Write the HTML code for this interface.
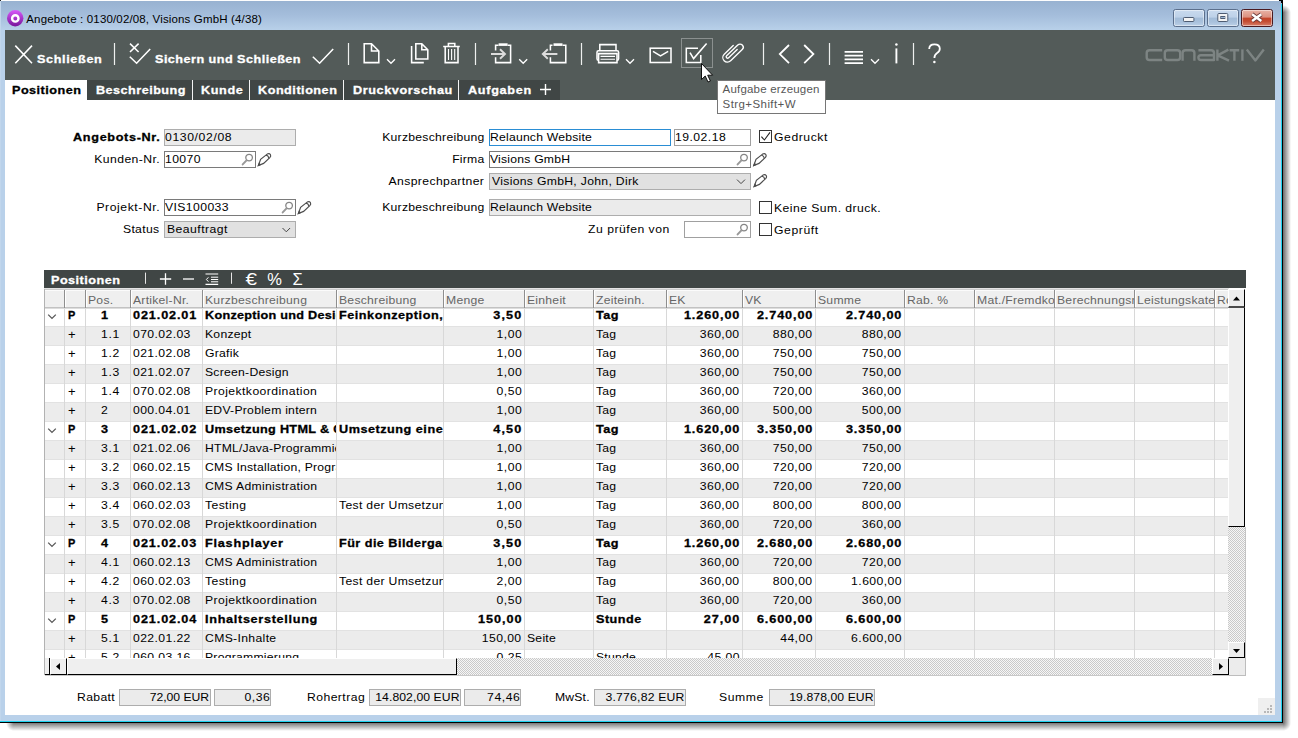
<!DOCTYPE html>
<html><head><meta charset="utf-8"><title>Angebote</title><style>
html,body{margin:0;padding:0;background:#fff;}
body{width:1298px;height:738px;overflow:hidden;position:relative;font-family:'Liberation Sans',sans-serif;font-size:11.5px;}
div,span,svg{position:absolute;box-sizing:border-box;}
.t{white-space:pre;line-height:14px;}
.c{position:relative;display:inline-block;white-space:pre;line-height:14px;}
.cell{overflow:hidden;white-space:nowrap;height:18px;padding-top:0;}
.f{height:17px;border:1px solid #adadad;background:#ebebeb;}
.fw{height:17px;border:1px solid #7a7a7a;background:#fff;}
.fs{height:17px;border:1px solid #adadad;background:#e1e1e1;}
.cb{width:13px;height:13px;border:1px solid #333;background:#fff;}
</style></head><body>
<div style="left:14px;top:723px;width:1269px;height:8px;background:linear-gradient(to bottom,rgba(0,0,0,.52),rgba(0,0,0,0));"></div>
<div style="left:6px;top:723px;width:8px;height:8px;background:radial-gradient(circle 8px at 100% 0,rgba(0,0,0,.52),rgba(0,0,0,0));"></div>
<div style="left:1283px;top:13px;width:8px;height:710px;background:linear-gradient(to right,rgba(0,0,0,.58),rgba(0,0,0,0));"></div>
<div style="left:1283px;top:5px;width:8px;height:8px;background:radial-gradient(circle 8px at 0 100%,rgba(0,0,0,.58),rgba(0,0,0,0));"></div>
<div style="left:1283px;top:723px;width:8px;height:8px;background:radial-gradient(circle 8px at 0 0,rgba(0,0,0,.55),rgba(0,0,0,0));"></div>
<div style="left:0;top:0;width:1283px;height:723px;background:#b9d1ea;"></div>
<div style="left:0;top:0;width:1283px;height:30px;background:linear-gradient(#97b1d0,#a4bddb 50%,#b8d0e9);"></div>
<div style="left:1px;top:0;width:1279px;height:1px;background:#fdfdfd;"></div>
<div style="left:0;top:1px;width:1px;height:721px;background:#c1d6ec;"></div>
<div style="left:1281px;top:4px;width:1px;height:718px;background:#1fd4f0;"></div>
<div style="left:1282px;top:3px;width:1px;height:720px;background:#000;"></div>
<div style="left:0;top:721px;width:1282px;height:1px;background:#1fd4f0;"></div>
<div style="left:0;top:722px;width:1283px;height:1px;background:#000;"></div>
<div style="left:1279px;top:0;width:4px;height:1px;background:#000;"></div>
<div style="left:1281px;top:1px;width:2px;height:2px;background:#000;"></div>
<div style="left:0;top:0;width:1px;height:1px;background:#222;"></div>
<div style="left:5px;top:30px;width:1270px;height:685px;background:#fff;"></div>
<div style="left:5px;top:30px;width:1270px;height:70px;background:#535b59;"></div>
<div style="left:5px;top:80px;width:555px;height:20px;background:#404645;"></div>
<div style="left:5px;top:80px;width:82px;height:20px;background:#fff;"></div>
<div style="left:192px;top:80px;width:1px;height:20px;background:#f4f4f4;"></div>
<div style="left:249px;top:80px;width:1px;height:20px;background:#f4f4f4;"></div>
<div style="left:343px;top:80px;width:1px;height:20px;background:#f4f4f4;"></div>
<div style="left:458px;top:80px;width:1px;height:20px;background:#f4f4f4;"></div>
<div style="left:1173px;top:9px;width:32px;height:18px;border:1px solid #5b6f8c;border-radius:2.5px;background:linear-gradient(#c9daee 0%,#bdd1e8 45%,#a3bcd8 50%,#a9c1dc 75%,#bcd0e7 100%);box-shadow:inset 0 0 0 1px rgba(255,255,255,.45);"></div>
<div style="left:1207px;top:9px;width:32px;height:18px;border:1px solid #5b6f8c;border-radius:2.5px;background:linear-gradient(#c9daee 0%,#bdd1e8 45%,#a3bcd8 50%,#a9c1dc 75%,#bcd0e7 100%);box-shadow:inset 0 0 0 1px rgba(255,255,255,.45);"></div>
<div style="left:1241px;top:9px;width:32px;height:18px;border:1px solid #4a1a20;border-radius:2.5px;background:linear-gradient(#e9b3a6 0%,#dc8f7f 45%,#c4442a 50%,#c34a30 70%,#d87f6b 100%);box-shadow:inset 0 0 0 1px rgba(255,255,255,.45);"></div>
<div style="left:717px;top:80px;width:109px;height:34px;background:#fff;border:1px solid #767676;"></div>
<div class="f" style="left:164px;top:129px;width:132px;"></div>
<div class="fw" style="left:164px;top:151px;width:92px;"></div>
<div class="fw" style="left:164px;top:199px;width:132px;"></div>
<div class="fs" style="left:164px;top:221px;width:132px;"></div>
<div class="fw" style="left:489px;top:129px;width:182px;border-color:#2a8dd4;"></div>
<div class="fw" style="left:674px;top:129px;width:77px;border-color:#a0a0a0;"></div>
<div class="fw" style="left:489px;top:151px;width:262px;"></div>
<div class="fs" style="left:489px;top:173px;width:262px;"></div>
<div class="f" style="left:489px;top:199px;width:262px;"></div>
<div class="fw" style="left:684px;top:221px;width:67px;border-color:#a0a0a0;"></div>
<div class="cb" style="left:759px;top:130px;"></div>
<div class="cb" style="left:759px;top:201px;"></div>
<div class="cb" style="left:759px;top:223px;"></div>
<div style="left:44px;top:270px;width:1202px;height:18px;background:#404645;"></div>
<div style="left:44px;top:288px;width:1185px;height:20px;background:#efefef;border-bottom:1px solid #c2c2c2;"></div>
<div style="left:44px;top:288px;width:1185px;height:1px;background:#e4e4e4;"></div>
<div style="left:44px;top:289px;width:1185px;height:1px;background:#cdcdcd;"></div>
<div style="left:44px;top:290px;width:1185px;height:1px;background:#fbfbfb;"></div>
<div class="f" style="left:119px;top:689px;width:92px;"></div>
<div class="f" style="left:214px;top:689px;width:57px;"></div>
<div class="f" style="left:369px;top:689px;width:92px;"></div>
<div class="f" style="left:464px;top:689px;width:57px;"></div>
<div class="f" style="left:594px;top:689px;width:92px;"></div>
<div class="f" style="left:769px;top:689px;width:106px;"></div>
<div style="left:64px;top:290px;width:1px;height:18px;background:#8e8e8e;"></div>
<div style="left:65px;top:291px;width:1px;height:16px;background:#fff;"></div>
<div style="left:85px;top:290px;width:1px;height:18px;background:#8e8e8e;"></div>
<div style="left:86px;top:291px;width:1px;height:16px;background:#fff;"></div>
<div class="cell" style="left:86px;top:293px;width:44px;padding-left:2px;height:14px;">
<span class="c" style="font-size:11.5px;color:#666;letter-spacing:0.230px;transform:scaleX(1.06);transform-origin:0 0;">Pos.</span>
</div>
<div style="left:130px;top:290px;width:1px;height:18px;background:#8e8e8e;"></div>
<div style="left:131px;top:291px;width:1px;height:16px;background:#fff;"></div>
<div class="cell" style="left:131px;top:293px;width:71px;padding-left:2px;height:14px;">
<span class="c" style="font-size:11.5px;color:#666;letter-spacing:0.230px;transform:scaleX(1.06);transform-origin:0 0;">Artikel-Nr.</span>
</div>
<div style="left:202px;top:290px;width:1px;height:18px;background:#8e8e8e;"></div>
<div style="left:203px;top:291px;width:1px;height:16px;background:#fff;"></div>
<div class="cell" style="left:203px;top:293px;width:133px;padding-left:2px;height:14px;">
<span class="c" style="font-size:11.5px;color:#666;letter-spacing:0.230px;transform:scaleX(1.06);transform-origin:0 0;">Kurzbeschreibung</span>
</div>
<div style="left:336px;top:290px;width:1px;height:18px;background:#8e8e8e;"></div>
<div style="left:337px;top:291px;width:1px;height:16px;background:#fff;"></div>
<div class="cell" style="left:337px;top:293px;width:106px;padding-left:2px;height:14px;">
<span class="c" style="font-size:11.5px;color:#666;letter-spacing:0.230px;transform:scaleX(1.06);transform-origin:0 0;">Beschreibung</span>
</div>
<div style="left:443px;top:290px;width:1px;height:18px;background:#8e8e8e;"></div>
<div style="left:444px;top:291px;width:1px;height:16px;background:#fff;"></div>
<div class="cell" style="left:444px;top:293px;width:80px;padding-left:2px;height:14px;">
<span class="c" style="font-size:11.5px;color:#666;letter-spacing:0.230px;transform:scaleX(1.06);transform-origin:0 0;">Menge</span>
</div>
<div style="left:524px;top:290px;width:1px;height:18px;background:#8e8e8e;"></div>
<div style="left:525px;top:291px;width:1px;height:16px;background:#fff;"></div>
<div class="cell" style="left:525px;top:293px;width:68px;padding-left:2px;height:14px;">
<span class="c" style="font-size:11.5px;color:#666;letter-spacing:0.230px;transform:scaleX(1.06);transform-origin:0 0;">Einheit</span>
</div>
<div style="left:593px;top:290px;width:1px;height:18px;background:#8e8e8e;"></div>
<div style="left:594px;top:291px;width:1px;height:16px;background:#fff;"></div>
<div class="cell" style="left:594px;top:293px;width:72px;padding-left:2px;height:14px;">
<span class="c" style="font-size:11.5px;color:#666;letter-spacing:0.230px;transform:scaleX(1.06);transform-origin:0 0;">Zeiteinh.</span>
</div>
<div style="left:666px;top:290px;width:1px;height:18px;background:#8e8e8e;"></div>
<div style="left:667px;top:291px;width:1px;height:16px;background:#fff;"></div>
<div class="cell" style="left:667px;top:293px;width:75px;padding-left:2px;height:14px;">
<span class="c" style="font-size:11.5px;color:#666;letter-spacing:0.230px;transform:scaleX(1.06);transform-origin:0 0;">EK</span>
</div>
<div style="left:742px;top:290px;width:1px;height:18px;background:#8e8e8e;"></div>
<div style="left:743px;top:291px;width:1px;height:16px;background:#fff;"></div>
<div class="cell" style="left:743px;top:293px;width:72px;padding-left:2px;height:14px;">
<span class="c" style="font-size:11.5px;color:#666;letter-spacing:0.230px;transform:scaleX(1.06);transform-origin:0 0;">VK</span>
</div>
<div style="left:815px;top:290px;width:1px;height:18px;background:#8e8e8e;"></div>
<div style="left:816px;top:291px;width:1px;height:16px;background:#fff;"></div>
<div class="cell" style="left:816px;top:293px;width:88px;padding-left:2px;height:14px;">
<span class="c" style="font-size:11.5px;color:#666;letter-spacing:0.230px;transform:scaleX(1.06);transform-origin:0 0;">Summe</span>
</div>
<div style="left:904px;top:290px;width:1px;height:18px;background:#8e8e8e;"></div>
<div style="left:905px;top:291px;width:1px;height:16px;background:#fff;"></div>
<div class="cell" style="left:905px;top:293px;width:69px;padding-left:2px;height:14px;">
<span class="c" style="font-size:11.5px;color:#666;letter-spacing:0.230px;transform:scaleX(1.06);transform-origin:0 0;">Rab. %</span>
</div>
<div style="left:974px;top:290px;width:1px;height:18px;background:#8e8e8e;"></div>
<div style="left:975px;top:291px;width:1px;height:16px;background:#fff;"></div>
<div class="cell" style="left:975px;top:293px;width:79px;padding-left:2px;height:14px;">
<span class="c" style="font-size:11.5px;color:#666;letter-spacing:0.230px;transform:scaleX(1.06);transform-origin:0 0;">Mat./Fremdkosten</span>
</div>
<div style="left:1054px;top:290px;width:1px;height:18px;background:#8e8e8e;"></div>
<div style="left:1055px;top:291px;width:1px;height:16px;background:#fff;"></div>
<div class="cell" style="left:1055px;top:293px;width:79px;padding-left:2px;height:14px;">
<span class="c" style="font-size:11.5px;color:#666;letter-spacing:0.230px;transform:scaleX(1.06);transform-origin:0 0;">Berechnungsmodus</span>
</div>
<div style="left:1134px;top:290px;width:1px;height:18px;background:#8e8e8e;"></div>
<div style="left:1135px;top:291px;width:1px;height:16px;background:#fff;"></div>
<div class="cell" style="left:1135px;top:293px;width:79px;padding-left:2px;height:14px;">
<span class="c" style="font-size:11.5px;color:#666;letter-spacing:0.230px;transform:scaleX(1.06);transform-origin:0 0;">Leistungskategorie</span>
</div>
<div style="left:1214px;top:290px;width:1px;height:18px;background:#8e8e8e;"></div>
<div style="left:1215px;top:291px;width:1px;height:16px;background:#fff;"></div>
<div class="cell" style="left:1215px;top:293px;width:13px;padding-left:2px;height:14px;">
<span class="c" style="font-size:11.5px;color:#666;letter-spacing:0.230px;transform:scaleX(1.06);transform-origin:0 0;">Rolle</span>
</div>
<div style="left:44px;top:308px;width:1184px;height:350px;overflow:hidden;background:#fff;">
<div style="left:0;top:0px;width:1184px;height:18px;background:#fff;"></div>
<div style="left:0;top:18px;width:1184px;height:1px;background:#e2e2e2;"></div>
<div class="cell" style="left:21px;top:0px;width:20px;padding-left:3px;padding-right:2.5px;text-align:left;">
<span class="c" style="font-size:11.5px;color:#000;letter-spacing:0.000px;font-weight:bold;-webkit-text-stroke:0.3px #000;transform:scaleX(0.95);transform-origin:0 0;">P</span>
</div>
<div class="cell" style="left:42px;top:0px;width:44px;padding-left:14.5px;padding-right:2.5px;text-align:left;">
<span class="c" style="font-size:11.5px;color:#000;letter-spacing:2.066px;font-weight:bold;-webkit-text-stroke:0.3px #000;transform:scaleX(1.1);transform-origin:0 0;">1</span>
</div>
<div class="cell" style="left:87px;top:0px;width:71px;padding-left:1.7px;padding-right:2.5px;text-align:left;">
<span class="c" style="font-size:11.5px;color:#000;letter-spacing:0.797px;font-weight:bold;-webkit-text-stroke:0.3px #000;transform:scaleX(1.1);transform-origin:0 0;">021.02.01</span>
</div>
<div class="cell" style="left:159px;top:0px;width:133px;padding-left:1.7px;padding-right:2.5px;text-align:left;">
<span class="c" style="font-size:11.5px;color:#000;letter-spacing:0.239px;font-weight:bold;-webkit-text-stroke:0.3px #000;transform:scaleX(1.1);transform-origin:0 0;">Konzeption und Design</span>
</div>
<div class="cell" style="left:293px;top:0px;width:106px;padding-left:1.7px;padding-right:2.5px;text-align:left;">
<span class="c" style="font-size:11.5px;color:#000;letter-spacing:0.480px;font-weight:bold;-webkit-text-stroke:0.3px #000;transform:scaleX(1.1);transform-origin:0 0;">Feinkonzeption,</span>
</div>
<div class="cell" style="left:400px;top:0px;width:80px;padding-left:1.7px;padding-right:2.5px;text-align:right;">
<span class="c" style="font-size:11.5px;color:#000;letter-spacing:0.977px;font-weight:bold;-webkit-text-stroke:0.3px #000;transform:scaleX(1.1);transform-origin:100% 0;margin-right:-0.977px;">3,50</span>
</div>
<div class="cell" style="left:550px;top:0px;width:72px;padding-left:1.7px;padding-right:2.5px;text-align:left;">
<span class="c" style="font-size:11.5px;color:#000;letter-spacing:0.420px;font-weight:bold;-webkit-text-stroke:0.3px #000;transform:scaleX(1.1);transform-origin:0 0;">Tag</span>
</div>
<div class="cell" style="left:623px;top:0px;width:75px;padding-left:1.7px;padding-right:2.5px;text-align:right;">
<span class="c" style="font-size:11.5px;color:#000;letter-spacing:0.809px;font-weight:bold;-webkit-text-stroke:0.3px #000;transform:scaleX(1.1);transform-origin:100% 0;margin-right:-0.809px;">1.260,00</span>
</div>
<div class="cell" style="left:699px;top:0px;width:72px;padding-left:1.7px;padding-right:2.5px;text-align:right;">
<span class="c" style="font-size:11.5px;color:#000;letter-spacing:0.809px;font-weight:bold;-webkit-text-stroke:0.3px #000;transform:scaleX(1.1);transform-origin:100% 0;margin-right:-0.809px;">2.740,00</span>
</div>
<div class="cell" style="left:772px;top:0px;width:88px;padding-left:1.7px;padding-right:2.5px;text-align:right;">
<span class="c" style="font-size:11.5px;color:#000;letter-spacing:0.809px;font-weight:bold;-webkit-text-stroke:0.3px #000;transform:scaleX(1.1);transform-origin:100% 0;margin-right:-0.809px;">2.740,00</span>
</div>
<div style="left:0;top:19px;width:1184px;height:18px;background:#ececec;"></div>
<div style="left:0;top:37px;width:1184px;height:1px;background:#e2e2e2;"></div>
<div class="cell" style="left:21px;top:19px;width:20px;padding-left:3px;padding-right:2.5px;text-align:left;">
<span class="c" style="font-size:13px;color:#000;letter-spacing:0.000px;transform-origin:0 0;top:1.4px;">+</span>
</div>
<div class="cell" style="left:42px;top:19px;width:44px;padding-left:14.5px;padding-right:2.5px;text-align:left;">
<span class="c" style="font-size:11.5px;color:#000;letter-spacing:0.579px;transform:scaleX(1.06);transform-origin:0 0;">1.1</span>
</div>
<div class="cell" style="left:87px;top:19px;width:71px;padding-left:1.7px;padding-right:2.5px;text-align:left;">
<span class="c" style="font-size:11.5px;color:#000;letter-spacing:0.373px;transform:scaleX(1.06);transform-origin:0 0;">070.02.03</span>
</div>
<div class="cell" style="left:159px;top:19px;width:133px;padding-left:1.7px;padding-right:2.5px;text-align:left;">
<span class="c" style="font-size:11.5px;color:#000;letter-spacing:0.230px;transform:scaleX(1.06);transform-origin:0 0;">Konzept</span>
</div>
<div class="cell" style="left:400px;top:19px;width:80px;padding-left:1.7px;padding-right:2.5px;text-align:right;">
<span class="c" style="font-size:11.5px;color:#000;letter-spacing:0.487px;transform:scaleX(1.06);transform-origin:100% 0;margin-right:-0.487px;">1,00</span>
</div>
<div class="cell" style="left:550px;top:19px;width:72px;padding-left:1.7px;padding-right:2.5px;text-align:left;">
<span class="c" style="font-size:11.5px;color:#000;letter-spacing:0.230px;transform:scaleX(1.06);transform-origin:0 0;">Tag</span>
</div>
<div class="cell" style="left:623px;top:19px;width:75px;padding-left:1.7px;padding-right:2.5px;text-align:right;">
<span class="c" style="font-size:11.5px;color:#000;letter-spacing:0.393px;transform:scaleX(1.06);transform-origin:100% 0;margin-right:-0.393px;">360,00</span>
</div>
<div class="cell" style="left:699px;top:19px;width:72px;padding-left:1.7px;padding-right:2.5px;text-align:right;">
<span class="c" style="font-size:11.5px;color:#000;letter-spacing:0.393px;transform:scaleX(1.06);transform-origin:100% 0;margin-right:-0.393px;">880,00</span>
</div>
<div class="cell" style="left:772px;top:19px;width:88px;padding-left:1.7px;padding-right:2.5px;text-align:right;">
<span class="c" style="font-size:11.5px;color:#000;letter-spacing:0.393px;transform:scaleX(1.06);transform-origin:100% 0;margin-right:-0.393px;">880,00</span>
</div>
<div style="left:0;top:38px;width:1184px;height:18px;background:#fff;"></div>
<div style="left:0;top:56px;width:1184px;height:1px;background:#e2e2e2;"></div>
<div class="cell" style="left:21px;top:38px;width:20px;padding-left:3px;padding-right:2.5px;text-align:left;">
<span class="c" style="font-size:13px;color:#000;letter-spacing:0.000px;transform-origin:0 0;top:1.4px;">+</span>
</div>
<div class="cell" style="left:42px;top:38px;width:44px;padding-left:14.5px;padding-right:2.5px;text-align:left;">
<span class="c" style="font-size:11.5px;color:#000;letter-spacing:0.579px;transform:scaleX(1.06);transform-origin:0 0;">1.2</span>
</div>
<div class="cell" style="left:87px;top:38px;width:71px;padding-left:1.7px;padding-right:2.5px;text-align:left;">
<span class="c" style="font-size:11.5px;color:#000;letter-spacing:0.373px;transform:scaleX(1.06);transform-origin:0 0;">021.02.08</span>
</div>
<div class="cell" style="left:159px;top:38px;width:133px;padding-left:1.7px;padding-right:2.5px;text-align:left;">
<span class="c" style="font-size:11.5px;color:#000;letter-spacing:0.230px;transform:scaleX(1.06);transform-origin:0 0;">Grafik</span>
</div>
<div class="cell" style="left:400px;top:38px;width:80px;padding-left:1.7px;padding-right:2.5px;text-align:right;">
<span class="c" style="font-size:11.5px;color:#000;letter-spacing:0.487px;transform:scaleX(1.06);transform-origin:100% 0;margin-right:-0.487px;">1,00</span>
</div>
<div class="cell" style="left:550px;top:38px;width:72px;padding-left:1.7px;padding-right:2.5px;text-align:left;">
<span class="c" style="font-size:11.5px;color:#000;letter-spacing:0.230px;transform:scaleX(1.06);transform-origin:0 0;">Tag</span>
</div>
<div class="cell" style="left:623px;top:38px;width:75px;padding-left:1.7px;padding-right:2.5px;text-align:right;">
<span class="c" style="font-size:11.5px;color:#000;letter-spacing:0.393px;transform:scaleX(1.06);transform-origin:100% 0;margin-right:-0.393px;">360,00</span>
</div>
<div class="cell" style="left:699px;top:38px;width:72px;padding-left:1.7px;padding-right:2.5px;text-align:right;">
<span class="c" style="font-size:11.5px;color:#000;letter-spacing:0.393px;transform:scaleX(1.06);transform-origin:100% 0;margin-right:-0.393px;">750,00</span>
</div>
<div class="cell" style="left:772px;top:38px;width:88px;padding-left:1.7px;padding-right:2.5px;text-align:right;">
<span class="c" style="font-size:11.5px;color:#000;letter-spacing:0.393px;transform:scaleX(1.06);transform-origin:100% 0;margin-right:-0.393px;">750,00</span>
</div>
<div style="left:0;top:57px;width:1184px;height:18px;background:#ececec;"></div>
<div style="left:0;top:75px;width:1184px;height:1px;background:#e2e2e2;"></div>
<div class="cell" style="left:21px;top:57px;width:20px;padding-left:3px;padding-right:2.5px;text-align:left;">
<span class="c" style="font-size:13px;color:#000;letter-spacing:0.000px;transform-origin:0 0;top:1.4px;">+</span>
</div>
<div class="cell" style="left:42px;top:57px;width:44px;padding-left:14.5px;padding-right:2.5px;text-align:left;">
<span class="c" style="font-size:11.5px;color:#000;letter-spacing:0.579px;transform:scaleX(1.06);transform-origin:0 0;">1.3</span>
</div>
<div class="cell" style="left:87px;top:57px;width:71px;padding-left:1.7px;padding-right:2.5px;text-align:left;">
<span class="c" style="font-size:11.5px;color:#000;letter-spacing:0.373px;transform:scaleX(1.06);transform-origin:0 0;">021.02.07</span>
</div>
<div class="cell" style="left:159px;top:57px;width:133px;padding-left:1.7px;padding-right:2.5px;text-align:left;">
<span class="c" style="font-size:11.5px;color:#000;letter-spacing:0.230px;transform:scaleX(1.06);transform-origin:0 0;">Screen-Design</span>
</div>
<div class="cell" style="left:400px;top:57px;width:80px;padding-left:1.7px;padding-right:2.5px;text-align:right;">
<span class="c" style="font-size:11.5px;color:#000;letter-spacing:0.487px;transform:scaleX(1.06);transform-origin:100% 0;margin-right:-0.487px;">1,00</span>
</div>
<div class="cell" style="left:550px;top:57px;width:72px;padding-left:1.7px;padding-right:2.5px;text-align:left;">
<span class="c" style="font-size:11.5px;color:#000;letter-spacing:0.230px;transform:scaleX(1.06);transform-origin:0 0;">Tag</span>
</div>
<div class="cell" style="left:623px;top:57px;width:75px;padding-left:1.7px;padding-right:2.5px;text-align:right;">
<span class="c" style="font-size:11.5px;color:#000;letter-spacing:0.393px;transform:scaleX(1.06);transform-origin:100% 0;margin-right:-0.393px;">360,00</span>
</div>
<div class="cell" style="left:699px;top:57px;width:72px;padding-left:1.7px;padding-right:2.5px;text-align:right;">
<span class="c" style="font-size:11.5px;color:#000;letter-spacing:0.393px;transform:scaleX(1.06);transform-origin:100% 0;margin-right:-0.393px;">750,00</span>
</div>
<div class="cell" style="left:772px;top:57px;width:88px;padding-left:1.7px;padding-right:2.5px;text-align:right;">
<span class="c" style="font-size:11.5px;color:#000;letter-spacing:0.393px;transform:scaleX(1.06);transform-origin:100% 0;margin-right:-0.393px;">750,00</span>
</div>
<div style="left:0;top:76px;width:1184px;height:18px;background:#fff;"></div>
<div style="left:0;top:94px;width:1184px;height:1px;background:#e2e2e2;"></div>
<div class="cell" style="left:21px;top:76px;width:20px;padding-left:3px;padding-right:2.5px;text-align:left;">
<span class="c" style="font-size:13px;color:#000;letter-spacing:0.000px;transform-origin:0 0;top:1.4px;">+</span>
</div>
<div class="cell" style="left:42px;top:76px;width:44px;padding-left:14.5px;padding-right:2.5px;text-align:left;">
<span class="c" style="font-size:11.5px;color:#000;letter-spacing:0.579px;transform:scaleX(1.06);transform-origin:0 0;">1.4</span>
</div>
<div class="cell" style="left:87px;top:76px;width:71px;padding-left:1.7px;padding-right:2.5px;text-align:left;">
<span class="c" style="font-size:11.5px;color:#000;letter-spacing:0.373px;transform:scaleX(1.06);transform-origin:0 0;">070.02.08</span>
</div>
<div class="cell" style="left:159px;top:76px;width:133px;padding-left:1.7px;padding-right:2.5px;text-align:left;">
<span class="c" style="font-size:11.5px;color:#000;letter-spacing:0.394px;transform:scaleX(1.06);transform-origin:0 0;">Projektkoordination</span>
</div>
<div class="cell" style="left:400px;top:76px;width:80px;padding-left:1.7px;padding-right:2.5px;text-align:right;">
<span class="c" style="font-size:11.5px;color:#000;letter-spacing:0.487px;transform:scaleX(1.06);transform-origin:100% 0;margin-right:-0.487px;">0,50</span>
</div>
<div class="cell" style="left:550px;top:76px;width:72px;padding-left:1.7px;padding-right:2.5px;text-align:left;">
<span class="c" style="font-size:11.5px;color:#000;letter-spacing:0.230px;transform:scaleX(1.06);transform-origin:0 0;">Tag</span>
</div>
<div class="cell" style="left:623px;top:76px;width:75px;padding-left:1.7px;padding-right:2.5px;text-align:right;">
<span class="c" style="font-size:11.5px;color:#000;letter-spacing:0.393px;transform:scaleX(1.06);transform-origin:100% 0;margin-right:-0.393px;">360,00</span>
</div>
<div class="cell" style="left:699px;top:76px;width:72px;padding-left:1.7px;padding-right:2.5px;text-align:right;">
<span class="c" style="font-size:11.5px;color:#000;letter-spacing:0.393px;transform:scaleX(1.06);transform-origin:100% 0;margin-right:-0.393px;">720,00</span>
</div>
<div class="cell" style="left:772px;top:76px;width:88px;padding-left:1.7px;padding-right:2.5px;text-align:right;">
<span class="c" style="font-size:11.5px;color:#000;letter-spacing:0.393px;transform:scaleX(1.06);transform-origin:100% 0;margin-right:-0.393px;">360,00</span>
</div>
<div style="left:0;top:95px;width:1184px;height:18px;background:#ececec;"></div>
<div style="left:0;top:113px;width:1184px;height:1px;background:#e2e2e2;"></div>
<div class="cell" style="left:21px;top:95px;width:20px;padding-left:3px;padding-right:2.5px;text-align:left;">
<span class="c" style="font-size:13px;color:#000;letter-spacing:0.000px;transform-origin:0 0;top:1.4px;">+</span>
</div>
<div class="cell" style="left:42px;top:95px;width:44px;padding-left:14.5px;padding-right:2.5px;text-align:left;">
<span class="c" style="font-size:11.5px;color:#000;letter-spacing:0.952px;transform:scaleX(1.06);transform-origin:0 0;">2</span>
</div>
<div class="cell" style="left:87px;top:95px;width:71px;padding-left:1.7px;padding-right:2.5px;text-align:left;">
<span class="c" style="font-size:11.5px;color:#000;letter-spacing:0.373px;transform:scaleX(1.06);transform-origin:0 0;">000.04.01</span>
</div>
<div class="cell" style="left:159px;top:95px;width:133px;padding-left:1.7px;padding-right:2.5px;text-align:left;">
<span class="c" style="font-size:11.5px;color:#000;letter-spacing:0.230px;transform:scaleX(1.06);transform-origin:0 0;">EDV-Problem intern</span>
</div>
<div class="cell" style="left:400px;top:95px;width:80px;padding-left:1.7px;padding-right:2.5px;text-align:right;">
<span class="c" style="font-size:11.5px;color:#000;letter-spacing:0.487px;transform:scaleX(1.06);transform-origin:100% 0;margin-right:-0.487px;">1,00</span>
</div>
<div class="cell" style="left:550px;top:95px;width:72px;padding-left:1.7px;padding-right:2.5px;text-align:left;">
<span class="c" style="font-size:11.5px;color:#000;letter-spacing:0.230px;transform:scaleX(1.06);transform-origin:0 0;">Tag</span>
</div>
<div class="cell" style="left:623px;top:95px;width:75px;padding-left:1.7px;padding-right:2.5px;text-align:right;">
<span class="c" style="font-size:11.5px;color:#000;letter-spacing:0.393px;transform:scaleX(1.06);transform-origin:100% 0;margin-right:-0.393px;">360,00</span>
</div>
<div class="cell" style="left:699px;top:95px;width:72px;padding-left:1.7px;padding-right:2.5px;text-align:right;">
<span class="c" style="font-size:11.5px;color:#000;letter-spacing:0.393px;transform:scaleX(1.06);transform-origin:100% 0;margin-right:-0.393px;">500,00</span>
</div>
<div class="cell" style="left:772px;top:95px;width:88px;padding-left:1.7px;padding-right:2.5px;text-align:right;">
<span class="c" style="font-size:11.5px;color:#000;letter-spacing:0.393px;transform:scaleX(1.06);transform-origin:100% 0;margin-right:-0.393px;">500,00</span>
</div>
<div style="left:0;top:114px;width:1184px;height:18px;background:#fff;"></div>
<div style="left:0;top:132px;width:1184px;height:1px;background:#e2e2e2;"></div>
<div class="cell" style="left:21px;top:114px;width:20px;padding-left:3px;padding-right:2.5px;text-align:left;">
<span class="c" style="font-size:11.5px;color:#000;letter-spacing:0.000px;font-weight:bold;-webkit-text-stroke:0.3px #000;transform:scaleX(0.95);transform-origin:0 0;">P</span>
</div>
<div class="cell" style="left:42px;top:114px;width:44px;padding-left:14.5px;padding-right:2.5px;text-align:left;">
<span class="c" style="font-size:11.5px;color:#000;letter-spacing:2.066px;font-weight:bold;-webkit-text-stroke:0.3px #000;transform:scaleX(1.1);transform-origin:0 0;">3</span>
</div>
<div class="cell" style="left:87px;top:114px;width:71px;padding-left:1.7px;padding-right:2.5px;text-align:left;">
<span class="c" style="font-size:11.5px;color:#000;letter-spacing:0.797px;font-weight:bold;-webkit-text-stroke:0.3px #000;transform:scaleX(1.1);transform-origin:0 0;">021.02.02</span>
</div>
<div class="cell" style="left:159px;top:114px;width:133px;padding-left:1.7px;padding-right:2.5px;text-align:left;">
<span class="c" style="font-size:11.5px;color:#000;letter-spacing:0.293px;font-weight:bold;-webkit-text-stroke:0.3px #000;transform:scaleX(1.1);transform-origin:0 0;">Umsetzung HTML &amp; CSS</span>
</div>
<div class="cell" style="left:293px;top:114px;width:106px;padding-left:1.7px;padding-right:2.5px;text-align:left;">
<span class="c" style="font-size:11.5px;color:#000;letter-spacing:0.467px;font-weight:bold;-webkit-text-stroke:0.3px #000;transform:scaleX(1.1);transform-origin:0 0;">Umsetzung eines</span>
</div>
<div class="cell" style="left:400px;top:114px;width:80px;padding-left:1.7px;padding-right:2.5px;text-align:right;">
<span class="c" style="font-size:11.5px;color:#000;letter-spacing:0.977px;font-weight:bold;-webkit-text-stroke:0.3px #000;transform:scaleX(1.1);transform-origin:100% 0;margin-right:-0.977px;">4,50</span>
</div>
<div class="cell" style="left:550px;top:114px;width:72px;padding-left:1.7px;padding-right:2.5px;text-align:left;">
<span class="c" style="font-size:11.5px;color:#000;letter-spacing:0.420px;font-weight:bold;-webkit-text-stroke:0.3px #000;transform:scaleX(1.1);transform-origin:0 0;">Tag</span>
</div>
<div class="cell" style="left:623px;top:114px;width:75px;padding-left:1.7px;padding-right:2.5px;text-align:right;">
<span class="c" style="font-size:11.5px;color:#000;letter-spacing:0.809px;font-weight:bold;-webkit-text-stroke:0.3px #000;transform:scaleX(1.1);transform-origin:100% 0;margin-right:-0.809px;">1.620,00</span>
</div>
<div class="cell" style="left:699px;top:114px;width:72px;padding-left:1.7px;padding-right:2.5px;text-align:right;">
<span class="c" style="font-size:11.5px;color:#000;letter-spacing:0.809px;font-weight:bold;-webkit-text-stroke:0.3px #000;transform:scaleX(1.1);transform-origin:100% 0;margin-right:-0.809px;">3.350,00</span>
</div>
<div class="cell" style="left:772px;top:114px;width:88px;padding-left:1.7px;padding-right:2.5px;text-align:right;">
<span class="c" style="font-size:11.5px;color:#000;letter-spacing:0.809px;font-weight:bold;-webkit-text-stroke:0.3px #000;transform:scaleX(1.1);transform-origin:100% 0;margin-right:-0.809px;">3.350,00</span>
</div>
<div style="left:0;top:133px;width:1184px;height:18px;background:#ececec;"></div>
<div style="left:0;top:151px;width:1184px;height:1px;background:#e2e2e2;"></div>
<div class="cell" style="left:21px;top:133px;width:20px;padding-left:3px;padding-right:2.5px;text-align:left;">
<span class="c" style="font-size:13px;color:#000;letter-spacing:0.000px;transform-origin:0 0;top:1.4px;">+</span>
</div>
<div class="cell" style="left:42px;top:133px;width:44px;padding-left:14.5px;padding-right:2.5px;text-align:left;">
<span class="c" style="font-size:11.5px;color:#000;letter-spacing:0.579px;transform:scaleX(1.06);transform-origin:0 0;">3.1</span>
</div>
<div class="cell" style="left:87px;top:133px;width:71px;padding-left:1.7px;padding-right:2.5px;text-align:left;">
<span class="c" style="font-size:11.5px;color:#000;letter-spacing:0.373px;transform:scaleX(1.06);transform-origin:0 0;">021.02.06</span>
</div>
<div class="cell" style="left:159px;top:133px;width:133px;padding-left:1.7px;padding-right:2.5px;text-align:left;">
<span class="c" style="font-size:11.5px;color:#000;letter-spacing:0.179px;transform:scaleX(1.06);transform-origin:0 0;">HTML/Java-Programmierung</span>
</div>
<div class="cell" style="left:400px;top:133px;width:80px;padding-left:1.7px;padding-right:2.5px;text-align:right;">
<span class="c" style="font-size:11.5px;color:#000;letter-spacing:0.487px;transform:scaleX(1.06);transform-origin:100% 0;margin-right:-0.487px;">1,00</span>
</div>
<div class="cell" style="left:550px;top:133px;width:72px;padding-left:1.7px;padding-right:2.5px;text-align:left;">
<span class="c" style="font-size:11.5px;color:#000;letter-spacing:0.230px;transform:scaleX(1.06);transform-origin:0 0;">Tag</span>
</div>
<div class="cell" style="left:623px;top:133px;width:75px;padding-left:1.7px;padding-right:2.5px;text-align:right;">
<span class="c" style="font-size:11.5px;color:#000;letter-spacing:0.393px;transform:scaleX(1.06);transform-origin:100% 0;margin-right:-0.393px;">360,00</span>
</div>
<div class="cell" style="left:699px;top:133px;width:72px;padding-left:1.7px;padding-right:2.5px;text-align:right;">
<span class="c" style="font-size:11.5px;color:#000;letter-spacing:0.393px;transform:scaleX(1.06);transform-origin:100% 0;margin-right:-0.393px;">750,00</span>
</div>
<div class="cell" style="left:772px;top:133px;width:88px;padding-left:1.7px;padding-right:2.5px;text-align:right;">
<span class="c" style="font-size:11.5px;color:#000;letter-spacing:0.393px;transform:scaleX(1.06);transform-origin:100% 0;margin-right:-0.393px;">750,00</span>
</div>
<div style="left:0;top:152px;width:1184px;height:18px;background:#fff;"></div>
<div style="left:0;top:170px;width:1184px;height:1px;background:#e2e2e2;"></div>
<div class="cell" style="left:21px;top:152px;width:20px;padding-left:3px;padding-right:2.5px;text-align:left;">
<span class="c" style="font-size:13px;color:#000;letter-spacing:0.000px;transform-origin:0 0;top:1.4px;">+</span>
</div>
<div class="cell" style="left:42px;top:152px;width:44px;padding-left:14.5px;padding-right:2.5px;text-align:left;">
<span class="c" style="font-size:11.5px;color:#000;letter-spacing:0.579px;transform:scaleX(1.06);transform-origin:0 0;">3.2</span>
</div>
<div class="cell" style="left:87px;top:152px;width:71px;padding-left:1.7px;padding-right:2.5px;text-align:left;">
<span class="c" style="font-size:11.5px;color:#000;letter-spacing:0.373px;transform:scaleX(1.06);transform-origin:0 0;">060.02.15</span>
</div>
<div class="cell" style="left:159px;top:152px;width:133px;padding-left:1.7px;padding-right:2.5px;text-align:left;">
<span class="c" style="font-size:11.5px;color:#000;letter-spacing:0.216px;transform:scaleX(1.06);transform-origin:0 0;">CMS Installation, Programmierung</span>
</div>
<div class="cell" style="left:400px;top:152px;width:80px;padding-left:1.7px;padding-right:2.5px;text-align:right;">
<span class="c" style="font-size:11.5px;color:#000;letter-spacing:0.487px;transform:scaleX(1.06);transform-origin:100% 0;margin-right:-0.487px;">1,00</span>
</div>
<div class="cell" style="left:550px;top:152px;width:72px;padding-left:1.7px;padding-right:2.5px;text-align:left;">
<span class="c" style="font-size:11.5px;color:#000;letter-spacing:0.230px;transform:scaleX(1.06);transform-origin:0 0;">Tag</span>
</div>
<div class="cell" style="left:623px;top:152px;width:75px;padding-left:1.7px;padding-right:2.5px;text-align:right;">
<span class="c" style="font-size:11.5px;color:#000;letter-spacing:0.393px;transform:scaleX(1.06);transform-origin:100% 0;margin-right:-0.393px;">360,00</span>
</div>
<div class="cell" style="left:699px;top:152px;width:72px;padding-left:1.7px;padding-right:2.5px;text-align:right;">
<span class="c" style="font-size:11.5px;color:#000;letter-spacing:0.393px;transform:scaleX(1.06);transform-origin:100% 0;margin-right:-0.393px;">720,00</span>
</div>
<div class="cell" style="left:772px;top:152px;width:88px;padding-left:1.7px;padding-right:2.5px;text-align:right;">
<span class="c" style="font-size:11.5px;color:#000;letter-spacing:0.393px;transform:scaleX(1.06);transform-origin:100% 0;margin-right:-0.393px;">720,00</span>
</div>
<div style="left:0;top:171px;width:1184px;height:18px;background:#ececec;"></div>
<div style="left:0;top:189px;width:1184px;height:1px;background:#e2e2e2;"></div>
<div class="cell" style="left:21px;top:171px;width:20px;padding-left:3px;padding-right:2.5px;text-align:left;">
<span class="c" style="font-size:13px;color:#000;letter-spacing:0.000px;transform-origin:0 0;top:1.4px;">+</span>
</div>
<div class="cell" style="left:42px;top:171px;width:44px;padding-left:14.5px;padding-right:2.5px;text-align:left;">
<span class="c" style="font-size:11.5px;color:#000;letter-spacing:0.579px;transform:scaleX(1.06);transform-origin:0 0;">3.3</span>
</div>
<div class="cell" style="left:87px;top:171px;width:71px;padding-left:1.7px;padding-right:2.5px;text-align:left;">
<span class="c" style="font-size:11.5px;color:#000;letter-spacing:0.373px;transform:scaleX(1.06);transform-origin:0 0;">060.02.13</span>
</div>
<div class="cell" style="left:159px;top:171px;width:133px;padding-left:1.7px;padding-right:2.5px;text-align:left;">
<span class="c" style="font-size:11.5px;color:#000;letter-spacing:0.276px;transform:scaleX(1.06);transform-origin:0 0;">CMS Administration</span>
</div>
<div class="cell" style="left:400px;top:171px;width:80px;padding-left:1.7px;padding-right:2.5px;text-align:right;">
<span class="c" style="font-size:11.5px;color:#000;letter-spacing:0.487px;transform:scaleX(1.06);transform-origin:100% 0;margin-right:-0.487px;">1,00</span>
</div>
<div class="cell" style="left:550px;top:171px;width:72px;padding-left:1.7px;padding-right:2.5px;text-align:left;">
<span class="c" style="font-size:11.5px;color:#000;letter-spacing:0.230px;transform:scaleX(1.06);transform-origin:0 0;">Tag</span>
</div>
<div class="cell" style="left:623px;top:171px;width:75px;padding-left:1.7px;padding-right:2.5px;text-align:right;">
<span class="c" style="font-size:11.5px;color:#000;letter-spacing:0.393px;transform:scaleX(1.06);transform-origin:100% 0;margin-right:-0.393px;">360,00</span>
</div>
<div class="cell" style="left:699px;top:171px;width:72px;padding-left:1.7px;padding-right:2.5px;text-align:right;">
<span class="c" style="font-size:11.5px;color:#000;letter-spacing:0.393px;transform:scaleX(1.06);transform-origin:100% 0;margin-right:-0.393px;">720,00</span>
</div>
<div class="cell" style="left:772px;top:171px;width:88px;padding-left:1.7px;padding-right:2.5px;text-align:right;">
<span class="c" style="font-size:11.5px;color:#000;letter-spacing:0.393px;transform:scaleX(1.06);transform-origin:100% 0;margin-right:-0.393px;">720,00</span>
</div>
<div style="left:0;top:190px;width:1184px;height:18px;background:#fff;"></div>
<div style="left:0;top:208px;width:1184px;height:1px;background:#e2e2e2;"></div>
<div class="cell" style="left:21px;top:190px;width:20px;padding-left:3px;padding-right:2.5px;text-align:left;">
<span class="c" style="font-size:13px;color:#000;letter-spacing:0.000px;transform-origin:0 0;top:1.4px;">+</span>
</div>
<div class="cell" style="left:42px;top:190px;width:44px;padding-left:14.5px;padding-right:2.5px;text-align:left;">
<span class="c" style="font-size:11.5px;color:#000;letter-spacing:0.579px;transform:scaleX(1.06);transform-origin:0 0;">3.4</span>
</div>
<div class="cell" style="left:87px;top:190px;width:71px;padding-left:1.7px;padding-right:2.5px;text-align:left;">
<span class="c" style="font-size:11.5px;color:#000;letter-spacing:0.373px;transform:scaleX(1.06);transform-origin:0 0;">060.02.03</span>
</div>
<div class="cell" style="left:159px;top:190px;width:133px;padding-left:1.7px;padding-right:2.5px;text-align:left;">
<span class="c" style="font-size:11.5px;color:#000;letter-spacing:0.361px;transform:scaleX(1.06);transform-origin:0 0;">Testing</span>
</div>
<div class="cell" style="left:293px;top:190px;width:106px;padding-left:1.7px;padding-right:2.5px;text-align:left;">
<span class="c" style="font-size:11.5px;color:#000;letter-spacing:0.292px;transform:scaleX(1.06);transform-origin:0 0;">Test der Umsetzung</span>
</div>
<div class="cell" style="left:400px;top:190px;width:80px;padding-left:1.7px;padding-right:2.5px;text-align:right;">
<span class="c" style="font-size:11.5px;color:#000;letter-spacing:0.487px;transform:scaleX(1.06);transform-origin:100% 0;margin-right:-0.487px;">1,00</span>
</div>
<div class="cell" style="left:550px;top:190px;width:72px;padding-left:1.7px;padding-right:2.5px;text-align:left;">
<span class="c" style="font-size:11.5px;color:#000;letter-spacing:0.230px;transform:scaleX(1.06);transform-origin:0 0;">Tag</span>
</div>
<div class="cell" style="left:623px;top:190px;width:75px;padding-left:1.7px;padding-right:2.5px;text-align:right;">
<span class="c" style="font-size:11.5px;color:#000;letter-spacing:0.393px;transform:scaleX(1.06);transform-origin:100% 0;margin-right:-0.393px;">360,00</span>
</div>
<div class="cell" style="left:699px;top:190px;width:72px;padding-left:1.7px;padding-right:2.5px;text-align:right;">
<span class="c" style="font-size:11.5px;color:#000;letter-spacing:0.393px;transform:scaleX(1.06);transform-origin:100% 0;margin-right:-0.393px;">800,00</span>
</div>
<div class="cell" style="left:772px;top:190px;width:88px;padding-left:1.7px;padding-right:2.5px;text-align:right;">
<span class="c" style="font-size:11.5px;color:#000;letter-spacing:0.393px;transform:scaleX(1.06);transform-origin:100% 0;margin-right:-0.393px;">800,00</span>
</div>
<div style="left:0;top:209px;width:1184px;height:18px;background:#ececec;"></div>
<div style="left:0;top:227px;width:1184px;height:1px;background:#e2e2e2;"></div>
<div class="cell" style="left:21px;top:209px;width:20px;padding-left:3px;padding-right:2.5px;text-align:left;">
<span class="c" style="font-size:13px;color:#000;letter-spacing:0.000px;transform-origin:0 0;top:1.4px;">+</span>
</div>
<div class="cell" style="left:42px;top:209px;width:44px;padding-left:14.5px;padding-right:2.5px;text-align:left;">
<span class="c" style="font-size:11.5px;color:#000;letter-spacing:0.579px;transform:scaleX(1.06);transform-origin:0 0;">3.5</span>
</div>
<div class="cell" style="left:87px;top:209px;width:71px;padding-left:1.7px;padding-right:2.5px;text-align:left;">
<span class="c" style="font-size:11.5px;color:#000;letter-spacing:0.373px;transform:scaleX(1.06);transform-origin:0 0;">070.02.08</span>
</div>
<div class="cell" style="left:159px;top:209px;width:133px;padding-left:1.7px;padding-right:2.5px;text-align:left;">
<span class="c" style="font-size:11.5px;color:#000;letter-spacing:0.394px;transform:scaleX(1.06);transform-origin:0 0;">Projektkoordination</span>
</div>
<div class="cell" style="left:400px;top:209px;width:80px;padding-left:1.7px;padding-right:2.5px;text-align:right;">
<span class="c" style="font-size:11.5px;color:#000;letter-spacing:0.487px;transform:scaleX(1.06);transform-origin:100% 0;margin-right:-0.487px;">0,50</span>
</div>
<div class="cell" style="left:550px;top:209px;width:72px;padding-left:1.7px;padding-right:2.5px;text-align:left;">
<span class="c" style="font-size:11.5px;color:#000;letter-spacing:0.230px;transform:scaleX(1.06);transform-origin:0 0;">Tag</span>
</div>
<div class="cell" style="left:623px;top:209px;width:75px;padding-left:1.7px;padding-right:2.5px;text-align:right;">
<span class="c" style="font-size:11.5px;color:#000;letter-spacing:0.393px;transform:scaleX(1.06);transform-origin:100% 0;margin-right:-0.393px;">360,00</span>
</div>
<div class="cell" style="left:699px;top:209px;width:72px;padding-left:1.7px;padding-right:2.5px;text-align:right;">
<span class="c" style="font-size:11.5px;color:#000;letter-spacing:0.393px;transform:scaleX(1.06);transform-origin:100% 0;margin-right:-0.393px;">720,00</span>
</div>
<div class="cell" style="left:772px;top:209px;width:88px;padding-left:1.7px;padding-right:2.5px;text-align:right;">
<span class="c" style="font-size:11.5px;color:#000;letter-spacing:0.393px;transform:scaleX(1.06);transform-origin:100% 0;margin-right:-0.393px;">360,00</span>
</div>
<div style="left:0;top:228px;width:1184px;height:18px;background:#fff;"></div>
<div style="left:0;top:246px;width:1184px;height:1px;background:#e2e2e2;"></div>
<div class="cell" style="left:21px;top:228px;width:20px;padding-left:3px;padding-right:2.5px;text-align:left;">
<span class="c" style="font-size:11.5px;color:#000;letter-spacing:0.000px;font-weight:bold;-webkit-text-stroke:0.3px #000;transform:scaleX(0.95);transform-origin:0 0;">P</span>
</div>
<div class="cell" style="left:42px;top:228px;width:44px;padding-left:14.5px;padding-right:2.5px;text-align:left;">
<span class="c" style="font-size:11.5px;color:#000;letter-spacing:2.066px;font-weight:bold;-webkit-text-stroke:0.3px #000;transform:scaleX(1.1);transform-origin:0 0;">4</span>
</div>
<div class="cell" style="left:87px;top:228px;width:71px;padding-left:1.7px;padding-right:2.5px;text-align:left;">
<span class="c" style="font-size:11.5px;color:#000;letter-spacing:0.797px;font-weight:bold;-webkit-text-stroke:0.3px #000;transform:scaleX(1.1);transform-origin:0 0;">021.02.03</span>
</div>
<div class="cell" style="left:159px;top:228px;width:133px;padding-left:1.7px;padding-right:2.5px;text-align:left;">
<span class="c" style="font-size:11.5px;color:#000;letter-spacing:0.701px;font-weight:bold;-webkit-text-stroke:0.3px #000;transform:scaleX(1.1);transform-origin:0 0;">Flashplayer</span>
</div>
<div class="cell" style="left:293px;top:228px;width:106px;padding-left:1.7px;padding-right:2.5px;text-align:left;">
<span class="c" style="font-size:11.5px;color:#000;letter-spacing:0.415px;font-weight:bold;-webkit-text-stroke:0.3px #000;transform:scaleX(1.1);transform-origin:0 0;">Für die Bildergalerie</span>
</div>
<div class="cell" style="left:400px;top:228px;width:80px;padding-left:1.7px;padding-right:2.5px;text-align:right;">
<span class="c" style="font-size:11.5px;color:#000;letter-spacing:0.977px;font-weight:bold;-webkit-text-stroke:0.3px #000;transform:scaleX(1.1);transform-origin:100% 0;margin-right:-0.977px;">3,50</span>
</div>
<div class="cell" style="left:550px;top:228px;width:72px;padding-left:1.7px;padding-right:2.5px;text-align:left;">
<span class="c" style="font-size:11.5px;color:#000;letter-spacing:0.420px;font-weight:bold;-webkit-text-stroke:0.3px #000;transform:scaleX(1.1);transform-origin:0 0;">Tag</span>
</div>
<div class="cell" style="left:623px;top:228px;width:75px;padding-left:1.7px;padding-right:2.5px;text-align:right;">
<span class="c" style="font-size:11.5px;color:#000;letter-spacing:0.809px;font-weight:bold;-webkit-text-stroke:0.3px #000;transform:scaleX(1.1);transform-origin:100% 0;margin-right:-0.809px;">1.260,00</span>
</div>
<div class="cell" style="left:699px;top:228px;width:72px;padding-left:1.7px;padding-right:2.5px;text-align:right;">
<span class="c" style="font-size:11.5px;color:#000;letter-spacing:0.809px;font-weight:bold;-webkit-text-stroke:0.3px #000;transform:scaleX(1.1);transform-origin:100% 0;margin-right:-0.809px;">2.680,00</span>
</div>
<div class="cell" style="left:772px;top:228px;width:88px;padding-left:1.7px;padding-right:2.5px;text-align:right;">
<span class="c" style="font-size:11.5px;color:#000;letter-spacing:0.809px;font-weight:bold;-webkit-text-stroke:0.3px #000;transform:scaleX(1.1);transform-origin:100% 0;margin-right:-0.809px;">2.680,00</span>
</div>
<div style="left:0;top:247px;width:1184px;height:18px;background:#ececec;"></div>
<div style="left:0;top:265px;width:1184px;height:1px;background:#e2e2e2;"></div>
<div class="cell" style="left:21px;top:247px;width:20px;padding-left:3px;padding-right:2.5px;text-align:left;">
<span class="c" style="font-size:13px;color:#000;letter-spacing:0.000px;transform-origin:0 0;top:1.4px;">+</span>
</div>
<div class="cell" style="left:42px;top:247px;width:44px;padding-left:14.5px;padding-right:2.5px;text-align:left;">
<span class="c" style="font-size:11.5px;color:#000;letter-spacing:0.579px;transform:scaleX(1.06);transform-origin:0 0;">4.1</span>
</div>
<div class="cell" style="left:87px;top:247px;width:71px;padding-left:1.7px;padding-right:2.5px;text-align:left;">
<span class="c" style="font-size:11.5px;color:#000;letter-spacing:0.373px;transform:scaleX(1.06);transform-origin:0 0;">060.02.13</span>
</div>
<div class="cell" style="left:159px;top:247px;width:133px;padding-left:1.7px;padding-right:2.5px;text-align:left;">
<span class="c" style="font-size:11.5px;color:#000;letter-spacing:0.276px;transform:scaleX(1.06);transform-origin:0 0;">CMS Administration</span>
</div>
<div class="cell" style="left:400px;top:247px;width:80px;padding-left:1.7px;padding-right:2.5px;text-align:right;">
<span class="c" style="font-size:11.5px;color:#000;letter-spacing:0.487px;transform:scaleX(1.06);transform-origin:100% 0;margin-right:-0.487px;">1,00</span>
</div>
<div class="cell" style="left:550px;top:247px;width:72px;padding-left:1.7px;padding-right:2.5px;text-align:left;">
<span class="c" style="font-size:11.5px;color:#000;letter-spacing:0.230px;transform:scaleX(1.06);transform-origin:0 0;">Tag</span>
</div>
<div class="cell" style="left:623px;top:247px;width:75px;padding-left:1.7px;padding-right:2.5px;text-align:right;">
<span class="c" style="font-size:11.5px;color:#000;letter-spacing:0.393px;transform:scaleX(1.06);transform-origin:100% 0;margin-right:-0.393px;">360,00</span>
</div>
<div class="cell" style="left:699px;top:247px;width:72px;padding-left:1.7px;padding-right:2.5px;text-align:right;">
<span class="c" style="font-size:11.5px;color:#000;letter-spacing:0.393px;transform:scaleX(1.06);transform-origin:100% 0;margin-right:-0.393px;">720,00</span>
</div>
<div class="cell" style="left:772px;top:247px;width:88px;padding-left:1.7px;padding-right:2.5px;text-align:right;">
<span class="c" style="font-size:11.5px;color:#000;letter-spacing:0.393px;transform:scaleX(1.06);transform-origin:100% 0;margin-right:-0.393px;">720,00</span>
</div>
<div style="left:0;top:266px;width:1184px;height:18px;background:#fff;"></div>
<div style="left:0;top:284px;width:1184px;height:1px;background:#e2e2e2;"></div>
<div class="cell" style="left:21px;top:266px;width:20px;padding-left:3px;padding-right:2.5px;text-align:left;">
<span class="c" style="font-size:13px;color:#000;letter-spacing:0.000px;transform-origin:0 0;top:1.4px;">+</span>
</div>
<div class="cell" style="left:42px;top:266px;width:44px;padding-left:14.5px;padding-right:2.5px;text-align:left;">
<span class="c" style="font-size:11.5px;color:#000;letter-spacing:0.579px;transform:scaleX(1.06);transform-origin:0 0;">4.2</span>
</div>
<div class="cell" style="left:87px;top:266px;width:71px;padding-left:1.7px;padding-right:2.5px;text-align:left;">
<span class="c" style="font-size:11.5px;color:#000;letter-spacing:0.373px;transform:scaleX(1.06);transform-origin:0 0;">060.02.03</span>
</div>
<div class="cell" style="left:159px;top:266px;width:133px;padding-left:1.7px;padding-right:2.5px;text-align:left;">
<span class="c" style="font-size:11.5px;color:#000;letter-spacing:0.361px;transform:scaleX(1.06);transform-origin:0 0;">Testing</span>
</div>
<div class="cell" style="left:293px;top:266px;width:106px;padding-left:1.7px;padding-right:2.5px;text-align:left;">
<span class="c" style="font-size:11.5px;color:#000;letter-spacing:0.292px;transform:scaleX(1.06);transform-origin:0 0;">Test der Umsetzung</span>
</div>
<div class="cell" style="left:400px;top:266px;width:80px;padding-left:1.7px;padding-right:2.5px;text-align:right;">
<span class="c" style="font-size:11.5px;color:#000;letter-spacing:0.487px;transform:scaleX(1.06);transform-origin:100% 0;margin-right:-0.487px;">2,00</span>
</div>
<div class="cell" style="left:550px;top:266px;width:72px;padding-left:1.7px;padding-right:2.5px;text-align:left;">
<span class="c" style="font-size:11.5px;color:#000;letter-spacing:0.230px;transform:scaleX(1.06);transform-origin:0 0;">Tag</span>
</div>
<div class="cell" style="left:623px;top:266px;width:75px;padding-left:1.7px;padding-right:2.5px;text-align:right;">
<span class="c" style="font-size:11.5px;color:#000;letter-spacing:0.393px;transform:scaleX(1.06);transform-origin:100% 0;margin-right:-0.393px;">360,00</span>
</div>
<div class="cell" style="left:699px;top:266px;width:72px;padding-left:1.7px;padding-right:2.5px;text-align:right;">
<span class="c" style="font-size:11.5px;color:#000;letter-spacing:0.393px;transform:scaleX(1.06);transform-origin:100% 0;margin-right:-0.393px;">800,00</span>
</div>
<div class="cell" style="left:772px;top:266px;width:88px;padding-left:1.7px;padding-right:2.5px;text-align:right;">
<span class="c" style="font-size:11.5px;color:#000;letter-spacing:0.395px;transform:scaleX(1.06);transform-origin:100% 0;margin-right:-0.395px;">1.600,00</span>
</div>
<div style="left:0;top:285px;width:1184px;height:18px;background:#ececec;"></div>
<div style="left:0;top:303px;width:1184px;height:1px;background:#e2e2e2;"></div>
<div class="cell" style="left:21px;top:285px;width:20px;padding-left:3px;padding-right:2.5px;text-align:left;">
<span class="c" style="font-size:13px;color:#000;letter-spacing:0.000px;transform-origin:0 0;top:1.4px;">+</span>
</div>
<div class="cell" style="left:42px;top:285px;width:44px;padding-left:14.5px;padding-right:2.5px;text-align:left;">
<span class="c" style="font-size:11.5px;color:#000;letter-spacing:0.579px;transform:scaleX(1.06);transform-origin:0 0;">4.3</span>
</div>
<div class="cell" style="left:87px;top:285px;width:71px;padding-left:1.7px;padding-right:2.5px;text-align:left;">
<span class="c" style="font-size:11.5px;color:#000;letter-spacing:0.373px;transform:scaleX(1.06);transform-origin:0 0;">070.02.08</span>
</div>
<div class="cell" style="left:159px;top:285px;width:133px;padding-left:1.7px;padding-right:2.5px;text-align:left;">
<span class="c" style="font-size:11.5px;color:#000;letter-spacing:0.394px;transform:scaleX(1.06);transform-origin:0 0;">Projektkoordination</span>
</div>
<div class="cell" style="left:400px;top:285px;width:80px;padding-left:1.7px;padding-right:2.5px;text-align:right;">
<span class="c" style="font-size:11.5px;color:#000;letter-spacing:0.487px;transform:scaleX(1.06);transform-origin:100% 0;margin-right:-0.487px;">0,50</span>
</div>
<div class="cell" style="left:550px;top:285px;width:72px;padding-left:1.7px;padding-right:2.5px;text-align:left;">
<span class="c" style="font-size:11.5px;color:#000;letter-spacing:0.230px;transform:scaleX(1.06);transform-origin:0 0;">Tag</span>
</div>
<div class="cell" style="left:623px;top:285px;width:75px;padding-left:1.7px;padding-right:2.5px;text-align:right;">
<span class="c" style="font-size:11.5px;color:#000;letter-spacing:0.393px;transform:scaleX(1.06);transform-origin:100% 0;margin-right:-0.393px;">360,00</span>
</div>
<div class="cell" style="left:699px;top:285px;width:72px;padding-left:1.7px;padding-right:2.5px;text-align:right;">
<span class="c" style="font-size:11.5px;color:#000;letter-spacing:0.393px;transform:scaleX(1.06);transform-origin:100% 0;margin-right:-0.393px;">720,00</span>
</div>
<div class="cell" style="left:772px;top:285px;width:88px;padding-left:1.7px;padding-right:2.5px;text-align:right;">
<span class="c" style="font-size:11.5px;color:#000;letter-spacing:0.393px;transform:scaleX(1.06);transform-origin:100% 0;margin-right:-0.393px;">360,00</span>
</div>
<div style="left:0;top:304px;width:1184px;height:18px;background:#fff;"></div>
<div style="left:0;top:322px;width:1184px;height:1px;background:#e2e2e2;"></div>
<div class="cell" style="left:21px;top:304px;width:20px;padding-left:3px;padding-right:2.5px;text-align:left;">
<span class="c" style="font-size:11.5px;color:#000;letter-spacing:0.000px;font-weight:bold;-webkit-text-stroke:0.3px #000;transform:scaleX(0.95);transform-origin:0 0;">P</span>
</div>
<div class="cell" style="left:42px;top:304px;width:44px;padding-left:14.5px;padding-right:2.5px;text-align:left;">
<span class="c" style="font-size:11.5px;color:#000;letter-spacing:2.066px;font-weight:bold;-webkit-text-stroke:0.3px #000;transform:scaleX(1.1);transform-origin:0 0;">5</span>
</div>
<div class="cell" style="left:87px;top:304px;width:71px;padding-left:1.7px;padding-right:2.5px;text-align:left;">
<span class="c" style="font-size:11.5px;color:#000;letter-spacing:0.797px;font-weight:bold;-webkit-text-stroke:0.3px #000;transform:scaleX(1.1);transform-origin:0 0;">021.02.04</span>
</div>
<div class="cell" style="left:159px;top:304px;width:133px;padding-left:1.7px;padding-right:2.5px;text-align:left;">
<span class="c" style="font-size:11.5px;color:#000;letter-spacing:0.629px;font-weight:bold;-webkit-text-stroke:0.3px #000;transform:scaleX(1.1);transform-origin:0 0;">Inhaltserstellung</span>
</div>
<div class="cell" style="left:400px;top:304px;width:80px;padding-left:1.7px;padding-right:2.5px;text-align:right;">
<span class="c" style="font-size:11.5px;color:#000;letter-spacing:0.888px;font-weight:bold;-webkit-text-stroke:0.3px #000;transform:scaleX(1.1);transform-origin:100% 0;margin-right:-0.888px;">150,00</span>
</div>
<div class="cell" style="left:550px;top:304px;width:72px;padding-left:1.7px;padding-right:2.5px;text-align:left;">
<span class="c" style="font-size:11.5px;color:#000;letter-spacing:0.420px;font-weight:bold;-webkit-text-stroke:0.3px #000;transform:scaleX(1.1);transform-origin:0 0;">Stunde</span>
</div>
<div class="cell" style="left:623px;top:304px;width:75px;padding-left:1.7px;padding-right:2.5px;text-align:right;">
<span class="c" style="font-size:11.5px;color:#000;letter-spacing:0.926px;font-weight:bold;-webkit-text-stroke:0.3px #000;transform:scaleX(1.1);transform-origin:100% 0;margin-right:-0.926px;">27,00</span>
</div>
<div class="cell" style="left:699px;top:304px;width:72px;padding-left:1.7px;padding-right:2.5px;text-align:right;">
<span class="c" style="font-size:11.5px;color:#000;letter-spacing:0.809px;font-weight:bold;-webkit-text-stroke:0.3px #000;transform:scaleX(1.1);transform-origin:100% 0;margin-right:-0.809px;">6.600,00</span>
</div>
<div class="cell" style="left:772px;top:304px;width:88px;padding-left:1.7px;padding-right:2.5px;text-align:right;">
<span class="c" style="font-size:11.5px;color:#000;letter-spacing:0.809px;font-weight:bold;-webkit-text-stroke:0.3px #000;transform:scaleX(1.1);transform-origin:100% 0;margin-right:-0.809px;">6.600,00</span>
</div>
<div style="left:0;top:323px;width:1184px;height:18px;background:#ececec;"></div>
<div style="left:0;top:341px;width:1184px;height:1px;background:#e2e2e2;"></div>
<div class="cell" style="left:21px;top:323px;width:20px;padding-left:3px;padding-right:2.5px;text-align:left;">
<span class="c" style="font-size:13px;color:#000;letter-spacing:0.000px;transform-origin:0 0;top:1.4px;">+</span>
</div>
<div class="cell" style="left:42px;top:323px;width:44px;padding-left:14.5px;padding-right:2.5px;text-align:left;">
<span class="c" style="font-size:11.5px;color:#000;letter-spacing:0.579px;transform:scaleX(1.06);transform-origin:0 0;">5.1</span>
</div>
<div class="cell" style="left:87px;top:323px;width:71px;padding-left:1.7px;padding-right:2.5px;text-align:left;">
<span class="c" style="font-size:11.5px;color:#000;letter-spacing:0.373px;transform:scaleX(1.06);transform-origin:0 0;">022.01.22</span>
</div>
<div class="cell" style="left:159px;top:323px;width:133px;padding-left:1.7px;padding-right:2.5px;text-align:left;">
<span class="c" style="font-size:11.5px;color:#000;letter-spacing:0.321px;transform:scaleX(1.06);transform-origin:0 0;">CMS-Inhalte</span>
</div>
<div class="cell" style="left:400px;top:323px;width:80px;padding-left:1.7px;padding-right:2.5px;text-align:right;">
<span class="c" style="font-size:11.5px;color:#000;letter-spacing:0.393px;transform:scaleX(1.06);transform-origin:100% 0;margin-right:-0.393px;">150,00</span>
</div>
<div class="cell" style="left:481px;top:323px;width:68px;padding-left:1.7px;padding-right:2.5px;text-align:left;">
<span class="c" style="font-size:11.5px;color:#000;letter-spacing:0.230px;transform:scaleX(1.06);transform-origin:0 0;">Seite</span>
</div>
<div class="cell" style="left:699px;top:323px;width:72px;padding-left:1.7px;padding-right:2.5px;text-align:right;">
<span class="c" style="font-size:11.5px;color:#000;letter-spacing:0.432px;transform:scaleX(1.06);transform-origin:100% 0;margin-right:-0.432px;">44,00</span>
</div>
<div class="cell" style="left:772px;top:323px;width:88px;padding-left:1.7px;padding-right:2.5px;text-align:right;">
<span class="c" style="font-size:11.5px;color:#000;letter-spacing:0.395px;transform:scaleX(1.06);transform-origin:100% 0;margin-right:-0.395px;">6.600,00</span>
</div>
<div style="left:0;top:342px;width:1184px;height:18px;background:#fff;"></div>
<div style="left:0;top:360px;width:1184px;height:1px;background:#e2e2e2;"></div>
<div class="cell" style="left:21px;top:342px;width:20px;padding-left:3px;padding-right:2.5px;text-align:left;">
<span class="c" style="font-size:13px;color:#000;letter-spacing:0.000px;transform-origin:0 0;top:1.4px;">+</span>
</div>
<div class="cell" style="left:42px;top:342px;width:44px;padding-left:14.5px;padding-right:2.5px;text-align:left;">
<span class="c" style="font-size:11.5px;color:#000;letter-spacing:0.579px;transform:scaleX(1.06);transform-origin:0 0;">5.2</span>
</div>
<div class="cell" style="left:87px;top:342px;width:71px;padding-left:1.7px;padding-right:2.5px;text-align:left;">
<span class="c" style="font-size:11.5px;color:#000;letter-spacing:0.373px;transform:scaleX(1.06);transform-origin:0 0;">060.03.16</span>
</div>
<div class="cell" style="left:159px;top:342px;width:133px;padding-left:1.7px;padding-right:2.5px;text-align:left;">
<span class="c" style="font-size:11.5px;color:#000;letter-spacing:0.230px;transform:scaleX(1.06);transform-origin:0 0;">Programmierung</span>
</div>
<div class="cell" style="left:400px;top:342px;width:80px;padding-left:1.7px;padding-right:2.5px;text-align:right;">
<span class="c" style="font-size:11.5px;color:#000;letter-spacing:0.487px;transform:scaleX(1.06);transform-origin:100% 0;margin-right:-0.487px;">0,25</span>
</div>
<div class="cell" style="left:550px;top:342px;width:72px;padding-left:1.7px;padding-right:2.5px;text-align:left;">
<span class="c" style="font-size:11.5px;color:#000;letter-spacing:0.230px;transform:scaleX(1.06);transform-origin:0 0;">Stunde</span>
</div>
<div class="cell" style="left:623px;top:342px;width:75px;padding-left:1.7px;padding-right:2.5px;text-align:right;">
<span class="c" style="font-size:11.5px;color:#000;letter-spacing:0.432px;transform:scaleX(1.06);transform-origin:100% 0;margin-right:-0.432px;">45,00</span>
</div>
<div style="left:20px;top:0;width:1px;height:350px;background:#d8d8d8;"></div>
<div style="left:41px;top:0;width:1px;height:350px;background:#d8d8d8;"></div>
<div style="left:86px;top:0;width:1px;height:350px;background:#d8d8d8;"></div>
<div style="left:158px;top:0;width:1px;height:350px;background:#d8d8d8;"></div>
<div style="left:292px;top:0;width:1px;height:350px;background:#d8d8d8;"></div>
<div style="left:399px;top:0;width:1px;height:350px;background:#d8d8d8;"></div>
<div style="left:480px;top:0;width:1px;height:350px;background:#d8d8d8;"></div>
<div style="left:549px;top:0;width:1px;height:350px;background:#d8d8d8;"></div>
<div style="left:622px;top:0;width:1px;height:350px;background:#d8d8d8;"></div>
<div style="left:698px;top:0;width:1px;height:350px;background:#d8d8d8;"></div>
<div style="left:771px;top:0;width:1px;height:350px;background:#d8d8d8;"></div>
<div style="left:860px;top:0;width:1px;height:350px;background:#d8d8d8;"></div>
<div style="left:930px;top:0;width:1px;height:350px;background:#d8d8d8;"></div>
<div style="left:1010px;top:0;width:1px;height:350px;background:#d8d8d8;"></div>
<div style="left:1090px;top:0;width:1px;height:350px;background:#d8d8d8;"></div>
<div style="left:1170px;top:0;width:1px;height:350px;background:#d8d8d8;"></div>
<div style="left:0;top:0;width:1184px;height:1px;background:#dcdcdc;"></div>
</div>
<span class="t" style="font-size:11.5px;color:#000;letter-spacing:0.152px;left:26.3px;top:12px;transform-origin:0 0;">Angebote : 0130/02/08, Visions GmbH (4/38)</span>
<span class="t" style="font-size:11.5px;color:#fff;letter-spacing:0.570px;font-weight:bold;-webkit-text-stroke:0.3px #fff;transform:scaleX(1.1);left:37px;top:52px;transform-origin:0 0;">Schließen</span>
<span class="t" style="font-size:11.5px;color:#fff;letter-spacing:0.417px;font-weight:bold;-webkit-text-stroke:0.3px #fff;transform:scaleX(1.1);left:155px;top:52px;transform-origin:0 0;">Sichern und Schließen</span>
<span class="t" style="font-size:11.5px;color:#000;letter-spacing:0.431px;font-weight:bold;-webkit-text-stroke:0.3px #000;transform:scaleX(1.1);left:11.5px;top:83px;transform-origin:0 0;">Positionen</span>
<span class="t" style="font-size:11.5px;color:#fff;letter-spacing:0.420px;font-weight:bold;-webkit-text-stroke:0.3px #fff;transform:scaleX(1.1);left:96px;top:83px;transform-origin:0 0;">Beschreibung</span>
<span class="t" style="font-size:11.5px;color:#fff;letter-spacing:0.553px;font-weight:bold;-webkit-text-stroke:0.3px #fff;transform:scaleX(1.1);left:201px;top:83px;transform-origin:0 0;">Kunde</span>
<span class="t" style="font-size:11.5px;color:#fff;letter-spacing:0.464px;font-weight:bold;-webkit-text-stroke:0.3px #fff;transform:scaleX(1.1);left:258px;top:83px;transform-origin:0 0;">Konditionen</span>
<span class="t" style="font-size:11.5px;color:#fff;letter-spacing:0.545px;font-weight:bold;-webkit-text-stroke:0.3px #fff;transform:scaleX(1.1);left:352.5px;top:83px;transform-origin:0 0;">Druckvorschau</span>
<span class="t" style="font-size:11.5px;color:#fff;letter-spacing:0.632px;font-weight:bold;-webkit-text-stroke:0.3px #fff;transform:scaleX(1.1);left:467.5px;top:83px;transform-origin:0 0;">Aufgaben</span>
<span class="t" style="font-size:11.5px;color:#575757;letter-spacing:0.188px;left:722.6px;top:82px;transform-origin:0 0;">Aufgabe erzeugen</span>
<span class="t" style="font-size:11.5px;color:#575757;letter-spacing:0.417px;left:722.6px;top:96.5px;transform-origin:0 0;">Strg+Shift+W</span>
<span class="t" style="font-size:11.5px;color:#000;letter-spacing:0.604px;font-weight:bold;-webkit-text-stroke:0.3px #000;transform:scaleX(1.1);right:1137.54px;top:130px;transform-origin:100% 0;">Angebots-Nr.</span>
<span class="t" style="font-size:11.5px;color:#000;letter-spacing:0.389px;transform:scaleX(1.06);right:1138.09px;top:152px;transform-origin:100% 0;">Kunden-Nr.</span>
<span class="t" style="font-size:11.5px;color:#000;letter-spacing:0.533px;transform:scaleX(1.06);right:1137.94px;top:200px;transform-origin:100% 0;">Projekt-Nr.</span>
<span class="t" style="font-size:11.5px;color:#000;letter-spacing:0.320px;transform:scaleX(1.06);right:1138.16px;top:222px;transform-origin:100% 0;">Status</span>
<span class="t" style="font-size:11.5px;color:#000;letter-spacing:0.238px;transform:scaleX(1.06);right:813.548px;top:130px;transform-origin:100% 0;">Kurzbeschreibung</span>
<span class="t" style="font-size:11.5px;color:#000;letter-spacing:0.197px;transform:scaleX(1.06);right:813.591px;top:152px;transform-origin:100% 0;">Firma</span>
<span class="t" style="font-size:11.5px;color:#000;letter-spacing:0.350px;transform:scaleX(1.06);right:813.429px;top:174px;transform-origin:100% 0;">Ansprechpartner</span>
<span class="t" style="font-size:11.5px;color:#000;letter-spacing:0.238px;transform:scaleX(1.06);right:813.548px;top:200px;transform-origin:100% 0;">Kurzbeschreibung</span>
<span class="t" style="font-size:11.5px;color:#000;letter-spacing:0.477px;transform:scaleX(1.06);left:587.7px;top:222px;transform-origin:0 0;">Zu prüfen von</span>
<span class="t" style="font-size:11.5px;color:#000;letter-spacing:0.583px;transform:scaleX(1.06);left:164.6px;top:130px;transform-origin:0 0;">0130/02/08</span>
<span class="t" style="font-size:11.5px;color:#000;letter-spacing:0.377px;transform:scaleX(1.06);left:164.6px;top:152px;transform-origin:0 0;">10070</span>
<span class="t" style="font-size:11.5px;color:#000;letter-spacing:0.384px;transform:scaleX(1.06);left:164.6px;top:200px;transform-origin:0 0;">VIS100033</span>
<span class="t" style="font-size:11.5px;color:#000;letter-spacing:0.437px;transform:scaleX(1.06);left:166.8px;top:222px;transform-origin:0 0;">Beauftragt</span>
<span class="t" style="font-size:11.5px;color:#000;letter-spacing:0.194px;transform:scaleX(1.06);left:489.8px;top:130px;transform-origin:0 0;">Relaunch Website</span>
<span class="t" style="font-size:11.5px;color:#000;letter-spacing:0.442px;transform:scaleX(1.06);left:674.6px;top:130px;transform-origin:0 0;">19.02.18</span>
<span class="t" style="font-size:11.5px;color:#000;letter-spacing:0.197px;transform:scaleX(1.06);left:489.8px;top:152px;transform-origin:0 0;">Visions GmbH</span>
<span class="t" style="font-size:11.5px;color:#000;letter-spacing:0.289px;transform:scaleX(1.06);left:491.8px;top:174px;transform-origin:0 0;">Visions GmbH, John, Dirk</span>
<span class="t" style="font-size:11.5px;color:#000;letter-spacing:0.194px;transform:scaleX(1.06);left:489.8px;top:200px;transform-origin:0 0;">Relaunch Website</span>
<span class="t" style="font-size:11.5px;color:#000;letter-spacing:0.534px;transform:scaleX(1.06);left:774.3px;top:130px;transform-origin:0 0;">Gedruckt</span>
<span class="t" style="font-size:11.5px;color:#000;letter-spacing:0.421px;transform:scaleX(1.06);left:774.3px;top:201px;transform-origin:0 0;">Keine Sum. druck.</span>
<span class="t" style="font-size:11.5px;color:#000;letter-spacing:0.544px;transform:scaleX(1.06);left:774.3px;top:223px;transform-origin:0 0;">Geprüft</span>
<span class="t" style="font-size:11.5px;color:#fff;letter-spacing:0.431px;font-weight:bold;-webkit-text-stroke:0.3px #fff;transform:scaleX(1.1);left:50.5px;top:273px;transform-origin:0 0;">Positionen</span>
<span class="t" style="font-size:11.5px;color:#000;letter-spacing:0.342px;transform:scaleX(1.06);left:76.6px;top:690px;transform-origin:0 0;">Rabatt</span>
<span class="t" style="font-size:11.5px;color:#000;letter-spacing:-0.015px;transform:scaleX(1.06);right:1088.42px;top:690px;transform-origin:100% 0;">72,00 EUR</span>
<span class="t" style="font-size:11.5px;color:#000;letter-spacing:0.511px;transform:scaleX(1.06);right:1027.86px;top:690px;transform-origin:100% 0;">0,36</span>
<span class="t" style="font-size:11.5px;color:#000;letter-spacing:0.408px;transform:scaleX(1.06);left:306.6px;top:690px;transform-origin:0 0;">Rohertrag</span>
<span class="t" style="font-size:11.5px;color:#000;letter-spacing:0.068px;transform:scaleX(1.06);right:838.328px;top:690px;transform-origin:100% 0;">14.802,00 EUR</span>
<span class="t" style="font-size:11.5px;color:#000;letter-spacing:0.508px;transform:scaleX(1.06);right:777.862px;top:690px;transform-origin:100% 0;">74,46</span>
<span class="t" style="font-size:11.5px;color:#000;letter-spacing:0.157px;transform:scaleX(1.06);left:554.5px;top:690px;transform-origin:0 0;">MwSt.</span>
<span class="t" style="font-size:11.5px;color:#000;letter-spacing:0.198px;transform:scaleX(1.06);right:613.19px;top:690px;transform-origin:100% 0;">3.776,82 EUR</span>
<span class="t" style="font-size:11.5px;color:#000;letter-spacing:0.566px;transform:scaleX(1.06);left:719.3px;top:690px;transform-origin:0 0;">Summe</span>
<span class="t" style="font-size:11.5px;color:#000;letter-spacing:0.076px;transform:scaleX(1.06);right:424.32px;top:690px;transform-origin:100% 0;">19.878,00 EUR</span>
<div style="left:44px;top:289px;width:1px;height:386px;background:#b2b2b2;"></div>
<div style="left:1228px;top:289px;width:18px;height:369px;background:repeating-conic-gradient(#c9c9c9 0 25%,#f6f6f6 0 50%) 0 0/2px 2px;"></div>
<div style="left:1228px;top:289px;width:17px;height:19px;background:#ededed;border-left:1px solid #fff;border-top:1px solid #fff;border-bottom:2px solid #4a4a4a;border-right:1px solid #000;"></div>
<div style="left:1228px;top:308px;width:17px;height:219px;background:#efefef;border-left:1px solid #fff;border-right:1px solid #000;border-bottom:1px solid #000;"></div>
<div style="left:1245px;top:289px;width:1px;height:238px;background:#fff;"></div>
<div style="left:1228px;top:642px;width:17px;height:16px;background:#ededed;border-left:1px solid #fff;border-top:1px solid #fff;border-right:1px solid #000;border-bottom:1px solid #000;"></div>
<div style="left:45px;top:658px;width:1184px;height:18px;background:repeating-conic-gradient(#c9c9c9 0 25%,#f6f6f6 0 50%) 0 0/2px 2px;border-bottom:1px solid #c8c8c8;"></div>
<div style="left:45px;top:658px;width:5px;height:17px;background:#efefef;border-right:1px solid #000;border-bottom:1px solid #000;"></div>
<div style="left:50px;top:658px;width:17px;height:17px;background:#efefef;border-top:1px solid #fff;border-left:1px solid #fff;border-right:1px solid #000;border-bottom:1px solid #000;"></div>
<div style="left:67px;top:658px;width:390px;height:17px;background:#efefef;border-top:1px solid #fff;border-left:1px solid #fff;border-right:1px solid #000;border-bottom:1px solid #000;"></div>
<div style="left:1212px;top:658px;width:17px;height:17px;background:#ededed;border-top:1px solid #fff;border-left:1px solid #fff;border-right:1px solid #000;border-bottom:1px solid #000;"></div>
<div style="left:1229px;top:658px;width:17px;height:18px;background:#ececec;border-right:1px solid #bdbdbd;border-bottom:1px solid #bdbdbd;"></div>
<div style="left:1245px;top:527px;width:1px;height:131px;background:#c4c4c4;"></div>

<svg style="left:0;top:0" width="1298" height="738" viewBox="0 0 1298 738">
<defs>
<linearGradient id="pg" x1="0" y1="0" x2="0" y2="1"><stop offset="0" stop-color="#d859fa"/><stop offset="1" stop-color="#78159a"/></linearGradient>
<path id="chev" d="M0 0 L4 4 L8 0" fill="none" stroke="#fff" stroke-width="1.3"/>
<g id="mag" fill="none"><circle cx="0" cy="0" r="3.3" stroke="#858585" stroke-width="1.3"/><path d="M-2.6 2.8 L-6.4 6.8" stroke="#999" stroke-width="2" stroke-linecap="round"/></g>
<g id="pen" fill="none" stroke="#4c4c4c" stroke-width="1.15"><path d="M0.4 12.3 L2.6 6.2 L9.2 0.9 Q11.2 -0.3 12.4 1.3 Q13.3 2.9 11.8 4.4 L5.6 10.2 Z"/><path d="M8 2 Q10.5 2.3 10.9 5.1"/><path d="M0.4 12.3 L2.2 11.6 L1.2 10.2 Z" fill="#555"/></g>
</defs>
<!-- app icon -->
<circle cx="15.2" cy="18.2" r="8.2" fill="url(#pg)"/>
<circle cx="15.3" cy="18.4" r="3.2" fill="none" stroke="#fff" stroke-width="2.4"/>
<!-- caption glyphs -->
<rect x="1183.5" y="17.5" width="10.4" height="4" rx="0.8" fill="#f4f4f4" stroke="#4e5c72" stroke-width="1"/>
<rect x="1217.8" y="13.5" width="10" height="8" rx="1" fill="#f4f4f4" stroke="#4e5c72" stroke-width="1"/>
<rect x="1220.8" y="16.5" width="4" height="2" fill="#9ab3d0" stroke="#4e5c72" stroke-width="1"/>
<path d="M1252.1 14.3 L1261.3 21 M1261.3 14.3 L1252.1 21" stroke="#6b3a3a" stroke-width="4.2" stroke-linecap="butt"/>
<path d="M1252.1 14.3 L1261.3 21 M1261.3 14.3 L1252.1 21" stroke="#fff" stroke-width="2.5" stroke-linecap="butt"/>
<!-- toolbar -->
<g fill="none" stroke="#fff" stroke-width="1.55">
<path d="M15.3 45.6 L32 63.2 M32 45.6 L15.3 63.2"/>
<path d="M130 43.6 L138.6 52 M138.6 43.6 L130 52"/>
<path d="M129.8 56.8 L136.6 63.2 L150.2 49"/>
<path d="M312.8 56.8 L319.6 63.2 L333.2 49"/>
<!-- new doc -->
<path d="M371.5 43.7 H364.2 V62.6 H378.8 V51 Z M371.5 43.7 V51 H378.8"/>
<!-- copy -->
<path d="M421.8 43.7 H415.8 V59 H427.8 V49.8 Z M421.8 43.7 V49.8 H427.8"/>
<path d="M411.6 46 V62.6 H423.8"/>
<!-- trash -->
<path d="M443.2 46.4 H459.8 M448.4 46.4 V43.5 H454.8 V46.4 M445.2 46.4 V62.6 H458 V46.4"/>
<path d="M448.5 49 V60 M451.6 49 V60 M454.7 49 V60" stroke-width="1.1"/>
<!-- import -->
<path d="M498.5 45.2 H495.6 V50.6 M495.6 57.2 V62.6 H510.6 V45.2 H507.6"/>
<path d="M552.5 45.2 H550.4 V50.6 M550.4 57.2 V62.6 H565.8 V45.2 H562.6"/>
<!-- printer -->
<path d="M599.8 50.8 V44.6 H616 V50.8"/>
<rect x="597" y="50.8" width="21.6" height="9.4" rx="1.5"/>
<path d="M598.6 53.6 H617 V62.6 H598.6 Z" fill="#535b59"/>
<path d="M600.5 56.4 H615 M600.5 59.3 H615" stroke-width="1.1"/>
<!-- mail -->
<rect x="650.2" y="48.2" width="20.8" height="14.3"/>
<path d="M653 51.4 L660.5 55.8 L668.2 51.4"/>
<!-- task -->
<path d="M698 48.2 H686.3 V62.5 H700.8 V55"/>
<path d="M690 52.6 L693.6 58.6 L706.6 43.4"/>
<!-- nav -->
<path d="M789 45 L779.8 54.1 L789 63.2" stroke-width="1.8"/>
<path d="M804.2 45 L813.4 54.1 L804.2 63.2" stroke-width="1.8"/>
<!-- menu -->
<path d="M844.6 51.8 H863 M844.6 55.6 H863 M844.6 59.4 H863 M844.6 63.2 H863" stroke-width="1.7"/>
<!-- info -->
<path d="M896.4 48.4 V63.4" stroke-width="1.9"/>
<!-- help -->
<path d="M929.2 49 Q929.4 44.4 934.4 44.4 Q939.8 44.4 939.8 48.8 Q939.8 51.4 937.1 53 Q934.4 54.8 934.4 58" stroke-width="1.8"/>
</g>
<circle cx="896.4" cy="44.4" r="1.25" fill="#fff"/>
<circle cx="934.4" cy="61.9" r="1.25" fill="#fff"/>
<g fill="#fff"><rect x="498.6" y="43.3" width="9" height="2.6"/><rect x="553.5" y="43.3" width="9" height="2.6"/></g>
<g fill="none" stroke="#dcdcdc" stroke-width="1.9">
<path d="M491 54 H505 M500 49.2 L505 54 L500 58.8"/>
<path d="M557.4 54 H543.2 M547.8 49.2 L542.8 54 L547.8 58.8"/>
</g>
<!-- paperclip -->
<g fill="none" stroke="#fff" stroke-width="1.35" stroke-linecap="round" transform="translate(727.3 57.6) rotate(-44)">
<path d="M12.7 -4.6 H0.2 A4.6 4.6 0 0 0 0.2 4.6 H16.3 A3.2 3.2 0 0 0 16.3 -1.8 H0.8 A1.45 1.45 0 0 0 0.8 1.1 H12.7"/>
</g>
<!-- chevrons -->
<use href="#chev" x="387" y="59.3"/><use href="#chev" x="519.2" y="59.3"/><use href="#chev" x="626" y="59.3"/><use href="#chev" x="871" y="59.3"/>
<!-- separators -->
<g stroke="#eef0ef" stroke-width="1.2"><path d="M114.5 43 V65 M348.5 43 V65 M475.5 43 V65 M581.5 43 V65 M763.5 43 V65 M829.5 43 V65 M913.5 43 V65"/></g>
<!-- hover box -->
<rect x="681.5" y="38.5" width="31" height="29" fill="none" stroke="#8b908f" stroke-width="1"/>
<!-- plus in tab -->
<path d="M540 89.5 H551 M545.5 84 V95" stroke="#fff" stroke-width="1.4" fill="none"/>
<!-- logo -->
<g fill="none" stroke="#7d8483" stroke-width="2.4" stroke-linejoin="round">
<path d="M1162.2 50.2 H1149.5 Q1146.7 50.2 1146.7 53 V57.2 Q1146.7 60 1149.5 60 H1162.2"/>
<rect x="1164.8" y="50.2" width="15.4" height="9.8" rx="2.8"/>
<path d="M1182.6 60.8 V53 Q1182.6 50.2 1185.4 50.2 H1191.6 Q1194.4 50.2 1194.4 53 V60.8"/>
<path d="M1198.4 50.2 H1211.2 Q1214 50.2 1214 53 V60 H1201 Q1198.4 60 1198.4 57.6 Q1198.4 55.2 1201 55.2 H1214"/>
<path d="M1217.4 49.4 V60.8 M1228.4 49.6 L1217.6 55.4 L1229 60.6"/>
<path d="M1229.6 50.2 H1239.2 M1234.4 50.2 V60.8"/>
<path d="M1242.4 49.4 V60.8"/>
<path d="M1246.8 49.6 L1255.4 60.4 L1263.8 49.6"/>
</g>
<!-- cursor -->
<path d="M701.5 63.5 V79.5 L705.2 76 L708 82 L710.4 81 L707.7 75.2 H712.6 Z" fill="#fff" stroke="#000" stroke-width="0.9" stroke-linejoin="miter"/>
<!-- form icons -->
<use href="#mag" x="249.1" y="157.6"/><use href="#mag" x="289.1" y="205.6"/><use href="#mag" x="744" y="157.6"/><use href="#mag" x="744" y="227.6"/>
<use href="#pen" x="258" y="153.2"/><use href="#pen" x="298" y="201.2"/><use href="#pen" x="753.4" y="153.2"/><use href="#pen" x="753.8" y="174.2"/>
<g fill="none" stroke="#444" stroke-width="1"><path d="M282.5 228 L286.3 231.8 L290.1 228"/><path d="M737 179.6 L741 183.6 L745 179.6"/></g>
<path d="M761.4 136.6 L764.4 140 L770 132.4" fill="none" stroke="#222" stroke-width="1.1"/>
<!-- positionen bar icons -->
<g fill="none" stroke="#fff" stroke-width="1.3">
<path d="M145.5 272.6 V283.8 M231.5 272.6 V283.8" stroke-width="1" stroke="#e6e6e6"/>
<path d="M159.9 279 H171.2 M165.5 273.3 V284.7"/>
<path d="M183 279 H194"/>
<path d="M205.5 274 H218.2 M205.5 284.3 H218.2" stroke-width="1.2"/>
<path d="M211 277.2 H218.2 M211 279.5 H218.2 M211 281.8 H218.2" stroke-width="1"/>
<path d="M208.4 277.3 L206.4 279.5 L208.4 281.7" stroke-width="1"/>
</g>
<g fill="#fff" font-family="'Liberation Sans',sans-serif" font-size="16.5px">
<text x="245.4" y="284.8" transform="translate(245.4 0) scale(1.26 1) translate(-245.4 0)">€</text>
<text x="267.2" y="284.8">%</text>
<text x="292.6" y="284.8">Σ</text>
</g>
<!-- table chevrons -->
<g fill="none" stroke="#585858" stroke-width="1.3">
<path d="M48.2 314.6 L52 318.4 L55.8 314.6"/><path d="M48.2 428.6 L52 432.4 L55.8 428.6"/><path d="M48.2 542.6 L52 546.4 L55.8 542.6"/><path d="M48.2 618.6 L52 622.4 L55.8 618.6"/>
</g>
<!-- scroll arrows -->
<g fill="#000"><path d="M1233 300.6 L1236.5 296.4 L1240 300.6 Z"/><path d="M1233 649 L1236.5 653 L1240 649 Z"/><path d="M1219 663 L1223 666.5 L1219 670 Z"/><path d="M60 663 L56 666.5 L60 670 Z"/></g>
<!-- resize grip -->
<rect x="1258" y="698" width="17" height="17" fill="#efefef"/>
<g fill="#b8b8b8"><rect x="1270" y="705" width="2" height="2"/><rect x="1267" y="708" width="2" height="2"/><rect x="1270" y="708" width="2" height="2"/><rect x="1264" y="711" width="2" height="2"/><rect x="1267" y="711" width="2" height="2"/><rect x="1270" y="711" width="2" height="2"/></g>
</svg>

</body></html>
